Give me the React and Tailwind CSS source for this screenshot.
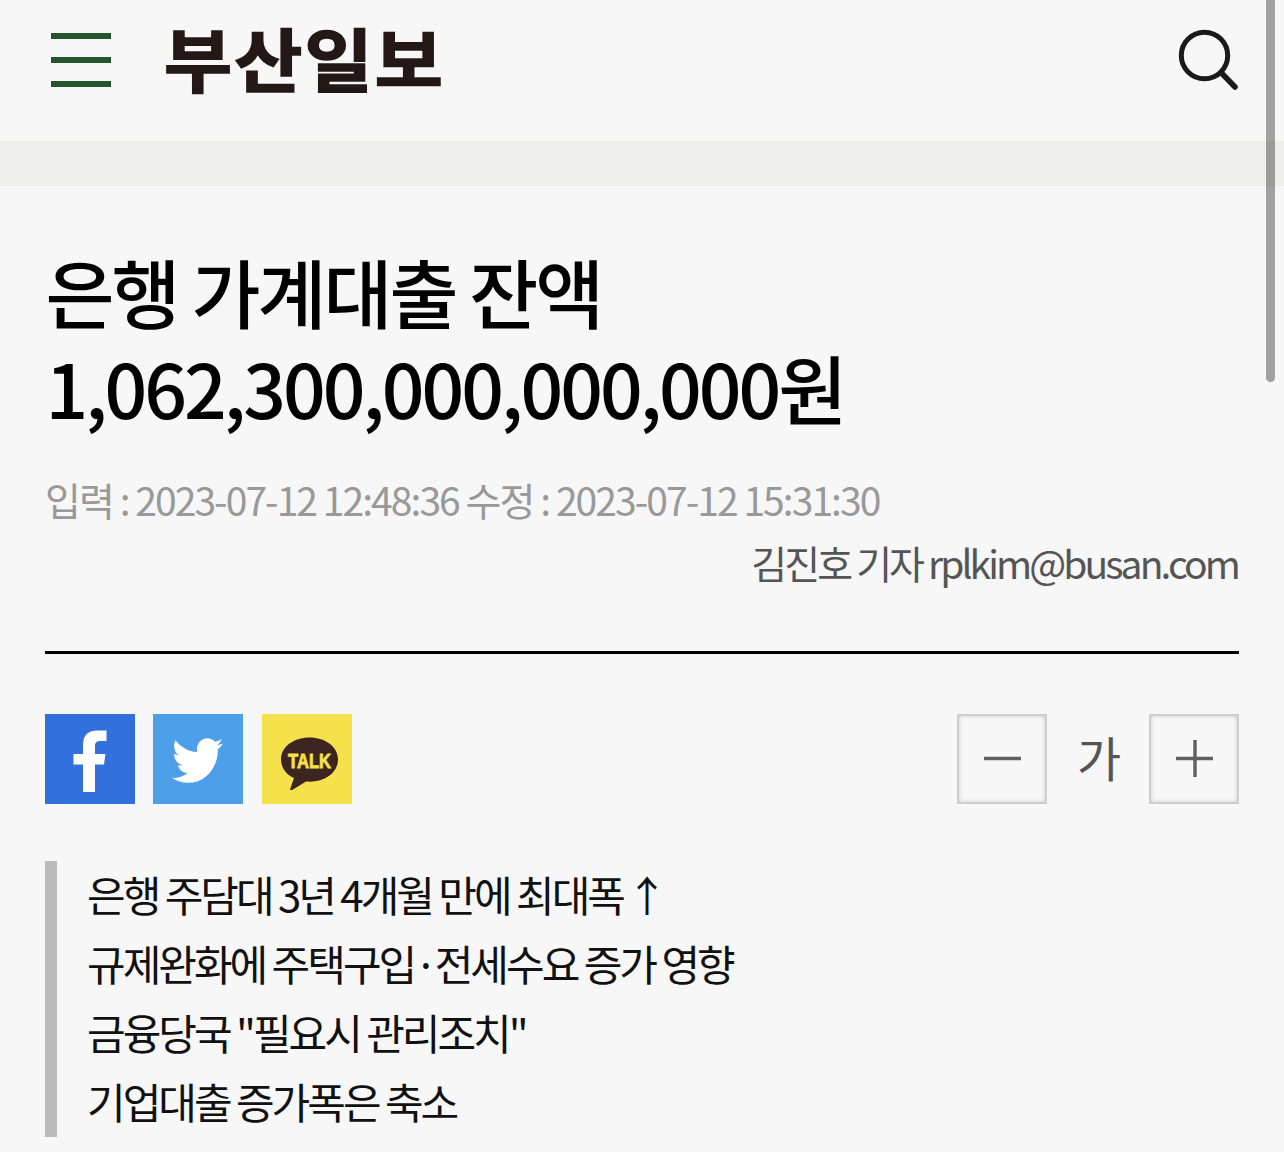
import { FaTwitter } from 'react-icons/fa';

const summary = [
  '규제완화에 주택구입·전세수요 증가 영향',
  '금융당국 "필요시 관리조치"',
  '기업대출 증가폭은 축소',
];

function Header() {
  return (
    <header className="flex h-[141px] items-start justify-between pl-[51px] pr-[45px]">
      <div className="flex items-start">
        <button aria-label="menu" className="mt-[33px] flex w-[60px] flex-col gap-[18px]">
          <span className="h-[6px] w-full bg-[#25542e]" />
          <span className="h-[6px] w-full bg-[#25542e]" />
          <span className="h-[6px] w-full bg-[#25542e]" />
        </button>
        <h1 className="ml-[53px] mt-[25px] origin-top-left scale-y-[0.93] text-[74px] font-bold leading-[70px] tracking-[2.2px] text-[#231815] [-webkit-text-stroke:1.8px_#231815]">
          부산일보
        </h1>
      </div>
      <button aria-label="search" className="mt-[29px]">
        <svg width="61" height="62" viewBox="0 0 61 62" fill="none" stroke="#1a1a1a">
          <circle cx="26.5" cy="26.5" r="23.2" strokeWidth="5" />
          <path d="M43 43.5 57 58" strokeWidth="5.5" strokeLinecap="round" />
        </svg>
      </button>
    </header>
  );
}

function ShareButtons() {
  return (
    <div className="flex">
      <button aria-label="facebook" className="h-[90px] w-[90px] bg-[#3270de]">
        <svg width="90" height="90" viewBox="0 0 90 90" fill="white">
          <path d="M38 78V50.5H28.5V40H38V31C38 21 43 16.500 53 16.500H61.500V27H55.500C51.500 27 50 28.500 50 32V40H60.500L59 50.500H50V78Z" />
        </svg>
      </button>
      <button aria-label="twitter" className="ml-[18px] flex h-[90px] w-[90px] items-center justify-center bg-[#4d9fea] pr-px text-white">
        <FaTwitter size={51} className="mt-[2px] scale-y-[1.08]" />
      </button>
      <button aria-label="kakaotalk" className="ml-[19px] h-[90px] w-[90px] bg-[#f5e14b]">
        <svg width="90" height="90" viewBox="0 0 90 90">
          <path d="M47.500 23.500C31.500 23.500 19 33 19 45.500C19 53.500 24 60.500 32 64L28 75.500C29 76.500 30 76 31 75.500L44 67.500C62 69 76 59 76 45.500C76 33 63.500 23.500 47.500 23.500Z" fill="#3c2420" />
          <text x="47.500" y="53.500" textAnchor="middle" textLength="43" lengthAdjust="spacingAndGlyphs" fontFamily="Liberation Sans" fontWeight="700" fontSize="20.500" fill="#f5e14b" stroke="#f5e14b" strokeWidth="0.800">TALK</text>
        </svg>
      </button>
    </div>
  );
}

function FontSize() {
  return (
    <div className="flex items-center">
      <button aria-label="smaller" className="h-[90px] w-[90px] border-2 border-[#cdcdcd] shadow-[inset_0_0_4px_#ccc]">
        <svg width="86" height="86" viewBox="0 0 86 86" stroke="#606060" strokeWidth="3.4">
          <path d="M25 42.500H62" />
        </svg>
      </button>
      <span className="-mt-[7px] w-[102px] pr-[1px] text-center text-[48px] leading-[90px] tracking-[-3px] text-[#555]">가</span>
      <button aria-label="larger" className="h-[90px] w-[90px] border-2 border-[#cdcdcd] shadow-[inset_0_0_4px_#ccc]">
        <svg width="86" height="86" viewBox="0 0 86 86" stroke="#606060" strokeWidth="3.4">
          <path d="M25 42.500H62M44 24V61" />
        </svg>
      </button>
    </div>
  );
}

export default function App() {
  return (
    <div className="relative h-[1152px] w-full overflow-hidden bg-[#f7f7f7] font-['Noto_Sans_CJK_KR',sans-serif]">
      <Header />
      <div className="h-[45px] bg-[#eeeeec]" />

      <main className="px-[45px]">
        {/* Title */}
        <h2 className="mt-[57px] pl-[0.5px] text-[75px] font-medium leading-[96px] tracking-[-3px] text-black">
          은행 가계대출 잔액
          <br />
          1,062,300,000,000,000원
        </h2>
        <p className="mt-[34px] text-[39px] leading-[60px] tracking-[-1.95px] text-[#999]">
          입력 : 2023-07-12 12:48:36 수정 : 2023-07-12 15:31:30
        </p>
        <p className="mt-[3px] pr-px text-right text-[39px] leading-[60px] tracking-[-2.9px] text-[#555]">
          김진호 기자 rplkim@busan.com
        </p>
        <div className="mt-[59px] h-[3px] bg-black" />

        <div className="mt-[60px] flex h-[90px] items-center justify-between">
          <ShareButtons />
          <FontSize />
        </div>

        {/* Summary */}
        <div className="mt-[57px] flow-root h-[276px] border-l-[12px] border-[#bababa] pl-[30px] text-[42px] leading-[69px] tracking-[-3px] text-[#111]">
          <div className="-mt-[2px]">
            <p>
              은행 주담대 3년 4개월 만에 최대폭<span className="ml-[3px]">↑</span>
            </p>
            {summary.map((line) => (
              <p key={line}>{line}</p>
            ))}
          </div>
        </div>
      </main>

      {/* Scrollbar */}
      <div className="absolute right-[9px] top-0 h-[382px] w-[9px] rounded-b-full bg-black/35" />
    </div>
  );
}
